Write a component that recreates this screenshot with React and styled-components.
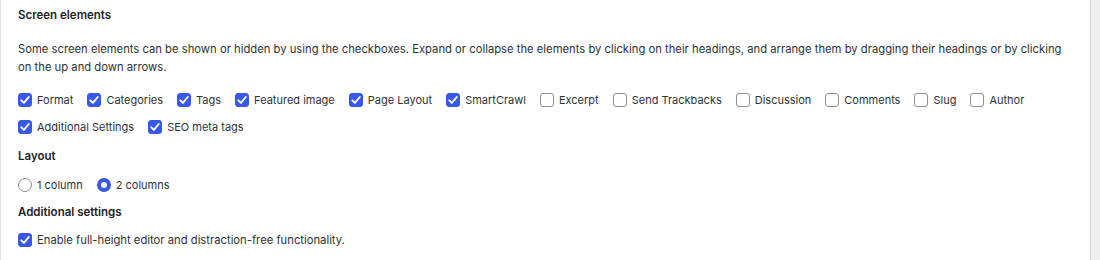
import styled, { createGlobalStyle } from "styled-components";

const GlobalStyle = createGlobalStyle`
    body {
        margin: 0;
        background: #f0f0f1;
        font-family: Inter, "Liberation Sans", sans-serif;
        -webkit-font-smoothing: antialiased;
    }
`;

const elements = [
    { name: 'Format', on: true },
    { name: 'Categories', on: true },
    { name: 'Tags', on: true },
    { name: 'Featured image', on: true },
    { name: 'Page Layout', on: true },
    { name: 'SmartCrawl', on: true },
    { name: 'Excerpt', on: false },
    { name: 'Send Trackbacks', on: false },
    { name: 'Discussion', on: false },
    { name: 'Comments', on: false },
    { name: 'Slug', on: false },
    { name: 'Author', on: false },
    { name: 'Additional Settings', on: true },
    { name: 'SEO meta tags', on: true },
];

const Check = ({ on }) => (
    <Box $on={on}>
        {on && (
            <svg width="12" height="12" viewBox="0 0 12 12">
                <path d="M2.3 6.3 L4.9 8.9 L9.8 3" fill="none" stroke="#fff" strokeWidth="1.9" strokeLinecap="round" strokeLinejoin="round" />
            </svg>
        )}
    </Box>
);

const Option = ({ on, children, wide }) => (
    <Item $wide={wide}>
        <Check on={on} />
        <span>{children}</span>
    </Item>
);

const App = () => {
    return (
        <>
            <GlobalStyle />
            <Page>
                <Panel>
                    <Heading $top={6}>Screen elements</Heading>
                    <Description>
                        Some screen elements can be shown or hidden by using the checkboxes. Expand or collapse the elements by clicking on their headings, and arrange them by dragging their headings or by clicking on the up and down arrows.
                    </Description>
                    <Options>
                        {elements.map(el => (
                            <Option key={el.name} on={el.on}>{el.name}</Option>
                        ))}
                    </Options>
                    <Heading $top={10}>Layout</Heading>
                    <RadioRow>
                        <Item>
                            <Radio />
                            <span>1 column</span>
                        </Item>
                        <Item>
                            <Radio $on />
                            <span>2 columns</span>
                        </Item>
                    </RadioRow>
                    <Heading $top={8}>Additional settings</Heading>
                    <Single>
                        <Option on wide>Enable full-height editor and distraction-free functionality.</Option>
                    </Single>
                </Panel>
                <Gutter />
            </Page>
        </>
    )
}

const Page = styled.div`
    display: flex;
    width: 1100px;
    height: 260px;
    overflow: hidden;
`;

const Panel = styled.div`
    width: 1091px;
    box-sizing: border-box;
    background: #fff;
    border-left: 1px solid #e2e2e4;
    border-right: 1px solid #dcdcde;
    padding: 0 17px;
`;

const Gutter = styled.div`
    flex: 1;
    background: #f0f0f1;
`;

const Heading = styled.h3`
    margin: ${({ $top }) => $top}px 0 0;
    font-size: 11.5px;
    line-height: 18px;
    font-weight: 600;
    color: #1d2327;
`;

const Description = styled.p`
    margin: 16px 0 0;
    font-size: 11.25px;
    line-height: 18px;
    color: #2c3338;
    padding-right: 10px;
`;

const Options = styled.div`
    margin-top: 14px;
    display: flex;
    flex-wrap: wrap;
    row-gap: 7px;
`;

const Item = styled.label`
    display: inline-flex;
    align-items: center;
    gap: 5px;
    height: 20px;
    margin-right: 14px;
    font-size: ${({ $wide }) => $wide ? '11.25px' : '11px'};
    color: #2c3338;
`;

const Box = styled.span`
    width: 14px;
    height: 14px;
    box-sizing: border-box;
    border-radius: 3px;
    display: flex;
    align-items: center;
    justify-content: center;
    background: ${({ $on }) => $on ? '#3858e9' : '#fff'};
    border: 1px solid ${({ $on }) => $on ? '#3858e9' : '#8c8f94'};
`;

const Radio = styled.span`
    width: 14px;
    height: 14px;
    box-sizing: border-box;
    border-radius: 50%;
    background: #fff;
    border: ${({ $on }) => $on ? '4px solid #3858e9' : '1px solid #8c8f94'};
`;

const RadioRow = styled.div`
    margin-top: 10px;
    display: flex;
`;

const Single = styled.div`
    margin-top: 9px;
    display: flex;
`;

export default App
